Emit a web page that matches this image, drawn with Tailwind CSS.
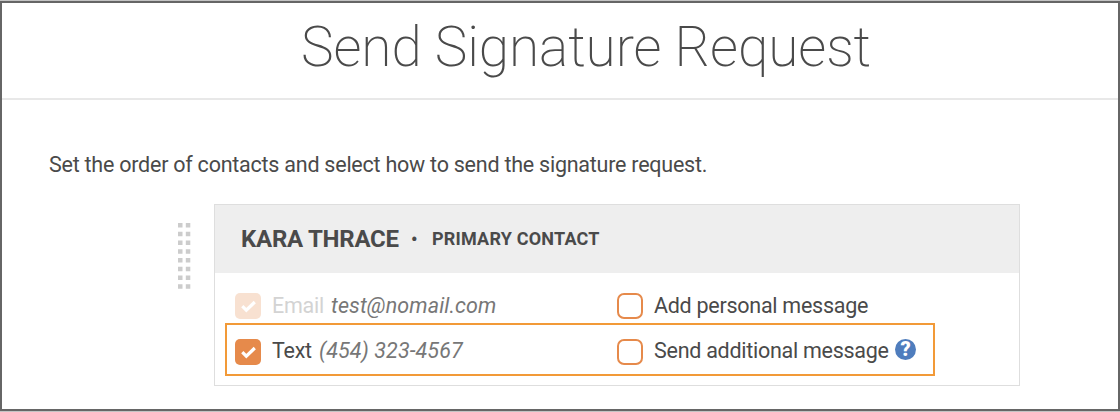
<!DOCTYPE html>
<html lang="en">
<head>
    <meta charset="UTF-8">
    <meta name="viewport" content="width=device-width, initial-scale=1.0">
    <title>Send Signature Request</title>
    <script src="https://cdn.jsdelivr.net/npm/@tailwindcss/browser@4"></script>
</head>
<body class="h-[412px] overflow-hidden bg-[#c4c4c4] py-px font-['Roboto',sans-serif] text-[#4a4a4a]">
    <div class="h-[410px] border-2 border-[#666666] bg-white">
        <header class="flex h-[97px] items-center justify-center border-b-2 border-[#e8e8e8] pb-1.5 pl-[52px]">
            <h1 class="text-[55px] leading-none font-extralight tracking-[-0.1px] whitespace-nowrap">Send Signature Request</h1>
        </header>

        <main class="pt-[51px] pl-[47px]">
            <p class="h-7 text-[21.5px] leading-7 tracking-[-0.24px] whitespace-nowrap">Set the order of contacts and select how to send the signature request.</p>

            <div class="mt-[25px] flex">
                <!-- Drag handle -->
                <svg class="mt-[19px] mr-[23px] ml-[129px] shrink-0" width="13" height="67" viewBox="0 0 13 67" fill="#cccccc">
                    <path d="M0 0h4.500v4.500h-4.500zM7.800 0h4.500v4.500h-4.500zM0 8.800h4.500v4.500h-4.500zM7.800 8.800h4.500v4.500h-4.500zM0 17.500h4.500v4.500h-4.500zM7.800 17.500h4.500v4.500h-4.500zM0 26.300h4.500v4.500h-4.500zM7.800 26.300h4.500v4.500h-4.500zM0 35h4.500v4.500h-4.500zM7.800 35h4.500v4.500h-4.500zM0 43.800h4.500v4.500h-4.500zM7.800 43.800h4.500v4.500h-4.500zM0 52.500h4.500v4.500h-4.500zM7.800 52.500h4.500v4.500h-4.500zM0 61.300h4.500v4.500h-4.500zM7.800 61.300h4.500v4.500h-4.500z"/>
                </svg>

                <section class="h-[182px] w-[806px] border border-[#dedede]">
                    <div class="flex h-[68px] items-center bg-[#eeeeee] pl-[26px] font-bold whitespace-nowrap">
                        <h2 class="w-[170px] text-[24px] tracking-[-0.25px]">KARA THRACE</h2>
                        <span class="w-[21px] text-[18px]">•</span>
                        <span class="pb-px text-[18px] tracking-[0.2px]">PRIMARY CONTACT</span>
                    </div>

                    <div class="pt-[9px] pl-[10px]">
                        <div class="flex h-[41px] items-center pt-[7px] pl-[10px] text-[21.5px] tracking-[-0.27px] whitespace-nowrap">
                            <div class="flex w-[382px] items-center">
                                <svg class="mr-[11px] opacity-25" width="26" height="26" viewBox="0 0 26 26">
                                    <rect width="26" height="26" rx="5" fill="#e68a4b"/>
                                    <path d="M7.300 13.200l4 4 8.500-8.200" fill="none" stroke="#fff" stroke-width="3.200"/>
                                </svg>
                                <span class="w-[59px] text-[#d3d3d3]">Email</span>
                                <span class="tracking-[0.1px] text-[#777777] italic">test@nomail.com</span>
                            </div>
                            <span class="mr-[11px] size-[26px] rounded-[7px] border-2 border-[#e68a4b]"></span>
                            <span>Add personal message</span>
                        </div>

                        <div class="flex h-[53px] w-[710px] items-center border-2 border-[#f29a38] pt-[4px] pl-2 text-[21.5px] tracking-[-0.27px] whitespace-nowrap">
                            <div class="flex w-[382px] items-center">
                                <svg class="mr-[11px]" width="26" height="26" viewBox="0 0 26 26">
                                    <rect width="26" height="26" rx="5" fill="#e68a4b"/>
                                    <path d="M7.300 13.200l4 4 8.500-8.200" fill="none" stroke="#fff" stroke-width="3.200"/>
                                </svg>
                                <span class="w-[47px]">Text</span>
                                <span class="tracking-[0.08px] text-[#777777] italic">(454) 323-4567</span>
                            </div>
                            <span class="mr-[11px] size-[26px] rounded-[7px] border-2 border-[#e68a4b]"></span>
                            <span class="w-[241px]">Send additional message</span>
                            <span class="mb-[5px] flex size-[21px] items-center justify-center rounded-full bg-[#4f7dbd] text-[20px] leading-none font-black text-white">?</span>
                        </div>
                    </div>
                </section>
            </div>
        </main>
    </div>
</body>
</html>
